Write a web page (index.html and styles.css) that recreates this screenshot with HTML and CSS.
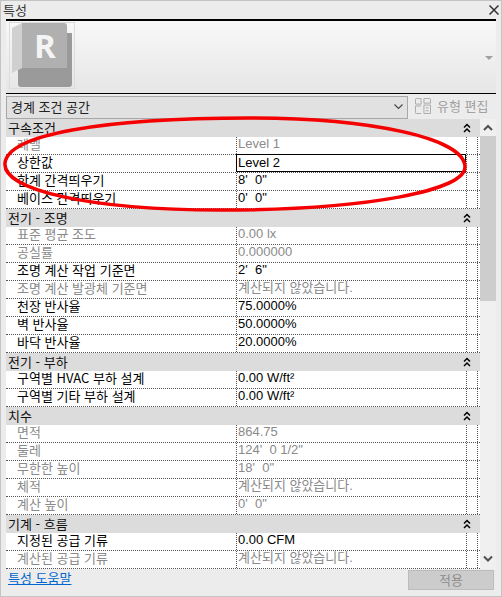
FILE: index.html
```html
<!DOCTYPE html>
<html lang="ko">
<head>
  <meta charset="UTF-8">
  <title>특성</title>
  <link rel="stylesheet" href="styles.css">
</head>
<body>
  <svg class="defs" width="0" height="0">
    <symbol id="collapse" viewBox="0 0 8 10">
      <path d="M1 4.5 L4 1.5 L7 4.5 M1 9 L4 6 L7 9" fill="none" stroke="#000" stroke-width="1.5"></path>
    </symbol>
  </svg>

  <div class="window">
    <div class="title-bar">
      <span class="title">특성</span>
      <svg class="close" width="10" height="10" viewBox="0 0 10 10">
        <path d="M0.5 0.5 L9.5 9.5 M9.5 0.5 L0.5 9.5" stroke="#333" stroke-width="1.5"></path>
      </svg>
    </div>

    <div class="panel">
      <!-- Type preview -->
      <div class="preview">
        <div class="thumb">
          <svg width="66" height="66" viewBox="0 0 66 66">
            <path d="M3 6 L13 1 V46 L3 51 Z" fill="#d0d0d0"></path>
            <path d="M13 1 H55 Q58 1 58 4 V46 H13 Z" fill="#b0b0b0"></path>
            <path d="M13 46 H58 V11 H63 V62 Q63 65 60 65 H12 Q9 65 9 62 V48 Z" fill="#9a9a9a"></path>
            <text class="logo-letter" x="36" y="36" text-anchor="middle">R</text>
          </svg>
        </div>
        <span class="preview-more"></span>
      </div>

      <!-- Type selector -->
      <div class="selector-row">
        <div class="selector">
          <span>경계 조건 공간</span>
          <svg width="9" height="6" viewBox="0 0 9 6"><path d="M0.5 0.5 L4.5 4.5 L8.5 0.5" fill="none" stroke="#444" stroke-width="1.1"></path></svg>
        </div>
        <div class="edit-type">
          <svg width="16" height="16" viewBox="0 0 17 17" fill="none" stroke="#a8a8a8">
            <path d="M6.5 0.5 H1.5 Q0.5 0.5 0.5 1.5 V6.5 H6.5 Z M0.5 8.5 V15.5 Q0.5 16.5 1.5 16.5 H6.5 M6.5 8.5 H0.5 M9.5 0.5 H15.5 Q16.5 0.5 16.5 1.5 V5.5 H9.5 Z M9.5 7.5 H16.5 V16.5 H9.5 Z M11.5 10.5 H14.5 M11.5 13.5 H14.5"></path>
          </svg>
          <span>유형 편집</span>
        </div>
      </div>

      <!-- Property grid -->
      <div class="body">
        <div class="grid">
          <div class="section"><span>구속조건</span><svg class="toggle"><use href="#collapse"></use></svg></div>
          <div class="row readonly"><span>레벨</span><span>Level 1</span><i></i></div>
          <div class="row active"><span>상한값</span><span>Level 2</span><i></i></div>
          <div class="row"><span>한계 간격띄우기</span><span>8'&nbsp; 0"</span><i></i></div>
          <div class="row"><span>베이스 간격띄우기</span><span>0'&nbsp; 0"</span><i></i></div>

          <div class="section"><span>전기 - 조명</span><svg class="toggle"><use href="#collapse"></use></svg></div>
          <div class="row readonly"><span>표준 평균 조도</span><span>0.00 lx</span><i></i></div>
          <div class="row readonly"><span>공실률</span><span>0.000000</span><i></i></div>
          <div class="row"><span>조명 계산 작업 기준면</span><span>2'&nbsp; 6"</span><i></i></div>
          <div class="row readonly"><span>조명 계산 발광체 기준면</span><span>계산되지 않았습니다.</span><i></i></div>
          <div class="row"><span>천장 반사율</span><span>75.0000%</span><i></i></div>
          <div class="row"><span>벽 반사율</span><span>50.0000%</span><i></i></div>
          <div class="row"><span>바닥 반사율</span><span>20.0000%</span><i></i></div>

          <div class="section"><span>전기 - 부하</span><svg class="toggle"><use href="#collapse"></use></svg></div>
          <div class="row"><span>구역별 HVAC 부하 설계</span><span>0.00 W/ft²</span><i></i></div>
          <div class="row"><span>구역별 기타 부하 설계</span><span>0.00 W/ft²</span><i></i></div>

          <div class="section"><span>치수</span><svg class="toggle"><use href="#collapse"></use></svg></div>
          <div class="row readonly"><span>면적</span><span>864.75</span><i></i></div>
          <div class="row readonly"><span>둘레</span><span>124'&nbsp; 0 1/2"</span><i></i></div>
          <div class="row readonly"><span>무한한 높이</span><span>18'&nbsp; 0"</span><i></i></div>
          <div class="row readonly"><span>체적</span><span>계산되지 않았습니다.</span><i></i></div>
          <div class="row readonly"><span>계산 높이</span><span>0'&nbsp; 0"</span><i></i></div>

          <div class="section"><span>기계 - 흐름</span><svg class="toggle"><use href="#collapse"></use></svg></div>
          <div class="row"><span>지정된 공급 기류</span><span>0.00 CFM</span><i></i></div>
          <div class="row readonly"><span>계산된 공급 기류</span><span>계산되지 않았습니다.</span><i></i></div>
        </div>

        <div class="scrollbar">
          <svg class="arrow arrow-up" width="16" height="17" viewBox="0 0 16 17"><path d="M4 11 L8 7 L12 11" fill="none" stroke="#505050" stroke-width="2"></path></svg>
          <div class="scroll-thumb"></div>
          <div class="scroll-rest"></div>
          <svg class="arrow arrow-down" width="16" height="16" viewBox="0 0 16 16"><path d="M4 5.5 L8 9.5 L12 5.5" fill="none" stroke="#505050" stroke-width="2"></path></svg>
        </div>
      </div>

      <div class="footer">
        <a class="help" href="#">특성 도움말</a>
        <button class="apply" disabled>적용</button>
      </div>
    </div>

    <!-- Hand drawn annotation on top of the screenshot -->
    <svg class="annotation" width="502" height="597" viewBox="0 0 502 597">
      <path d="M5 163 C8 135 100 118 250 118 C370 118 465 138 465 167 C465 190 370 210 220 210 C90 210 2 190 5 163 Z" fill="none" stroke="#f50000" stroke-width="3.5"></path>
    </svg>
  </div>
</body>
</html>
```

FILE: styles.css
```css
* {
  box-sizing: border-box;
}

body {
  margin: 0;
  font-family: "Noto Sans CJK KR", "Liberation Sans", sans-serif;
  font-size: 13px;
  color: #000;
}

.defs {
  display: block;
}

.window {
  position: relative;
  width: 502px;
  height: 597px;
  background: #ececec;
  border: 1px solid #c4c4c4;
  overflow: hidden;
}

/* Title bar */
.title-bar {
  display: flex;
  justify-content: space-between;
  align-items: center;
  height: 18px;
  padding: 0 2px 0 2px;
}

.title {
  color: #333;
  line-height: 18px;
}

/* Panel */
.panel {
  margin: 0 5px;
}

.preview {
  display: flex;
  justify-content: space-between;
  align-items: flex-start;
  height: 75px;
  padding: 1px 3px 0 3px;
  background: linear-gradient(#f8f8f8, #e6e6e6);
  border-top: 2px solid #000;
  border-bottom: 1px solid #000;
}

.thumb {
  width: 66px;
  height: 67px;
  border: 1px solid #dcdcdc;
}

.thumb svg {
  display: block;
  margin: -1px;
}

.logo-letter {
  font-family: "Open Sans", "Liberation Sans", sans-serif;
  font-size: 33px;
  font-weight: 700;
  fill: #f4f4f4;
}

.preview-more {
  align-self: center;
  width: 0;
  height: 0;
  border-left: 4px solid transparent;
  border-right: 4px solid transparent;
  border-top: 4px solid #a0a0a0;
}

/* Selector */
.selector-row {
  display: flex;
  align-items: center;
  height: 25px;
  padding-top: 1px;
}

.selector {
  display: flex;
  justify-content: space-between;
  align-items: center;
  width: 402px;
  height: 23px;
  padding: 0 4px 1px;
  line-height: 18px;
  background: #e1e1e1;
  border: 1px solid #a8a8a8;
  color: #222;
}

.edit-type {
  display: flex;
  align-items: center;
  gap: 6px;
  margin-left: 7px;
  margin-bottom: 3px;
  line-height: 18px;
  color: #a0a0a0;
}

/* Property grid */
.body {
  display: flex;
  height: 450px;
}

.grid {
  width: 474px;
  height: 450px;
  overflow: hidden;
}

.section {
  display: flex;
  justify-content: space-between;
  align-items: center;
  height: 18px;
  padding: 0 9px 1px 2px;
  line-height: 16px;
  background: #dcdcdc;
  color: #111;
}

.toggle {
  width: 8px;
  height: 10px;
  margin-top: 1px;
}

.row {
  display: grid;
  grid-template-columns: 230px 230px 12px 2px;
  height: 18px;
  line-height: 14px;
  background: #fff;
  border-bottom: 1px dotted #555;
}

.row span {
  padding-left: 2px;
  white-space: nowrap;
}

.row span:first-child {
  padding-left: 11px;
}

.row span:nth-child(2) {
  border-left: 1px dotted #555;
  padding-left: 1px;
  font-family: "Liberation Sans", "Noto Sans CJK KR", sans-serif;
}

.row i {
  border-left: 1px dotted #555;
  border-right: 1px dotted #555;
}

.row.readonly {
  color: #8a8a8a;
}

.row.active span:nth-child(2) {
  margin-top: -1px;
  height: 18px;
  line-height: 16px;
  border: 1px solid #000;
}

/* Scrollbar */
.scrollbar {
  display: flex;
  flex-direction: column;
  width: 16px;
  background: #f0f0f0;
}

.arrow {
  display: block;
  flex: none;
}

.arrow-down {
  margin-bottom: 2px;
}

.scroll-thumb {
  height: 165px;
  background: #cdcdcd;
}

.scroll-rest {
  flex: 1;
}

/* Footer */
.footer {
  display: flex;
  justify-content: space-between;
  align-items: flex-start;
  padding: 1px 2px 0 2px;
}

.help {
  color: #0066cc;
  line-height: 15px;
}

.apply {
  width: 86px;
  height: 20px;
  padding: 0;
  font: inherit;
  line-height: 16px;
  color: #8c8c8c;
  background: #cccccc;
  border: 1px solid #bcbcbc;
}

/* Annotation */
.annotation {
  position: absolute;
  top: -1px;
  left: -1px;
  pointer-events: none;
}
```
